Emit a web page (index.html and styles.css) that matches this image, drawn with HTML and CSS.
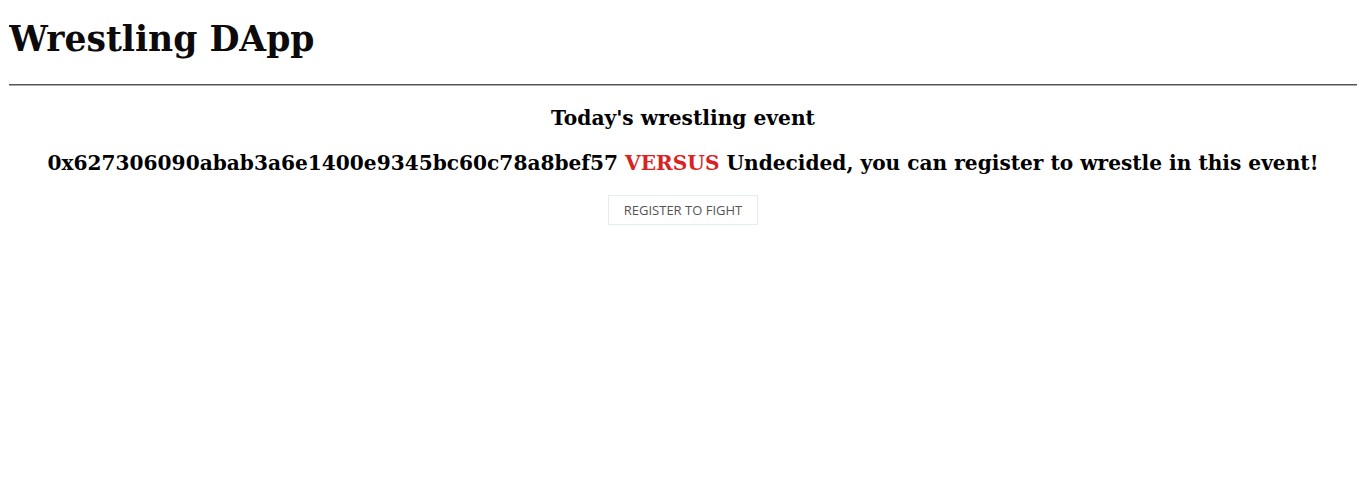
FILE: index.html
```html
<!DOCTYPE html>
<html>
<head>
<meta charset="utf-8">
<title>Wrestling DApp</title>
<link rel="stylesheet" href="styles.css">
</head>
<body>
<h1 class="title">Wrestling DApp</h1>
<hr class="rule">
<div class="event">
  <h3 class="event-title">Today's wrestling event</h3>
  <h3 class="event-line">0x627306090abab3a6e1400e9345bc60c78a8bef57 <span class="versus">VERSUS</span> Undecided, you can register to wrestle in this event!</h3>
  <button class="register">REGISTER TO FIGHT</button>
</div>
</body>
</html>
```
FILE: styles.css
```css
body {
  margin: 0 9px;
  padding-top: 1px;
  font-family: "DejaVu Serif", serif;
  color: #000;
  background: #fff;
}
.title {
  font-size: 34.56px;
  line-height: normal;
  margin: 18px 0 25px;
  color: #0d0a0b;
}
.rule {
  margin: 0;
  border: 0;
  border-top: 1px solid #555;
  border-bottom: 1px solid #aaa;
}
.event {
  text-align: center;
}
.event-title {
  font-size: 20.2px;
  margin: 20px 0 20.5px;
}
.event-line {
  font-size: 20.15px;
  margin: 0 0 20.5px;
}
.versus {
  color: #d92323;
}
.register {
  font-family: "Open Sans", sans-serif;
  font-size: 13px;
  line-height: 18px;
  color: #555;
  background: #fff;
  border: 1px solid #e3eef2;
  padding: 5px 15px;
  cursor: pointer;
}
```
